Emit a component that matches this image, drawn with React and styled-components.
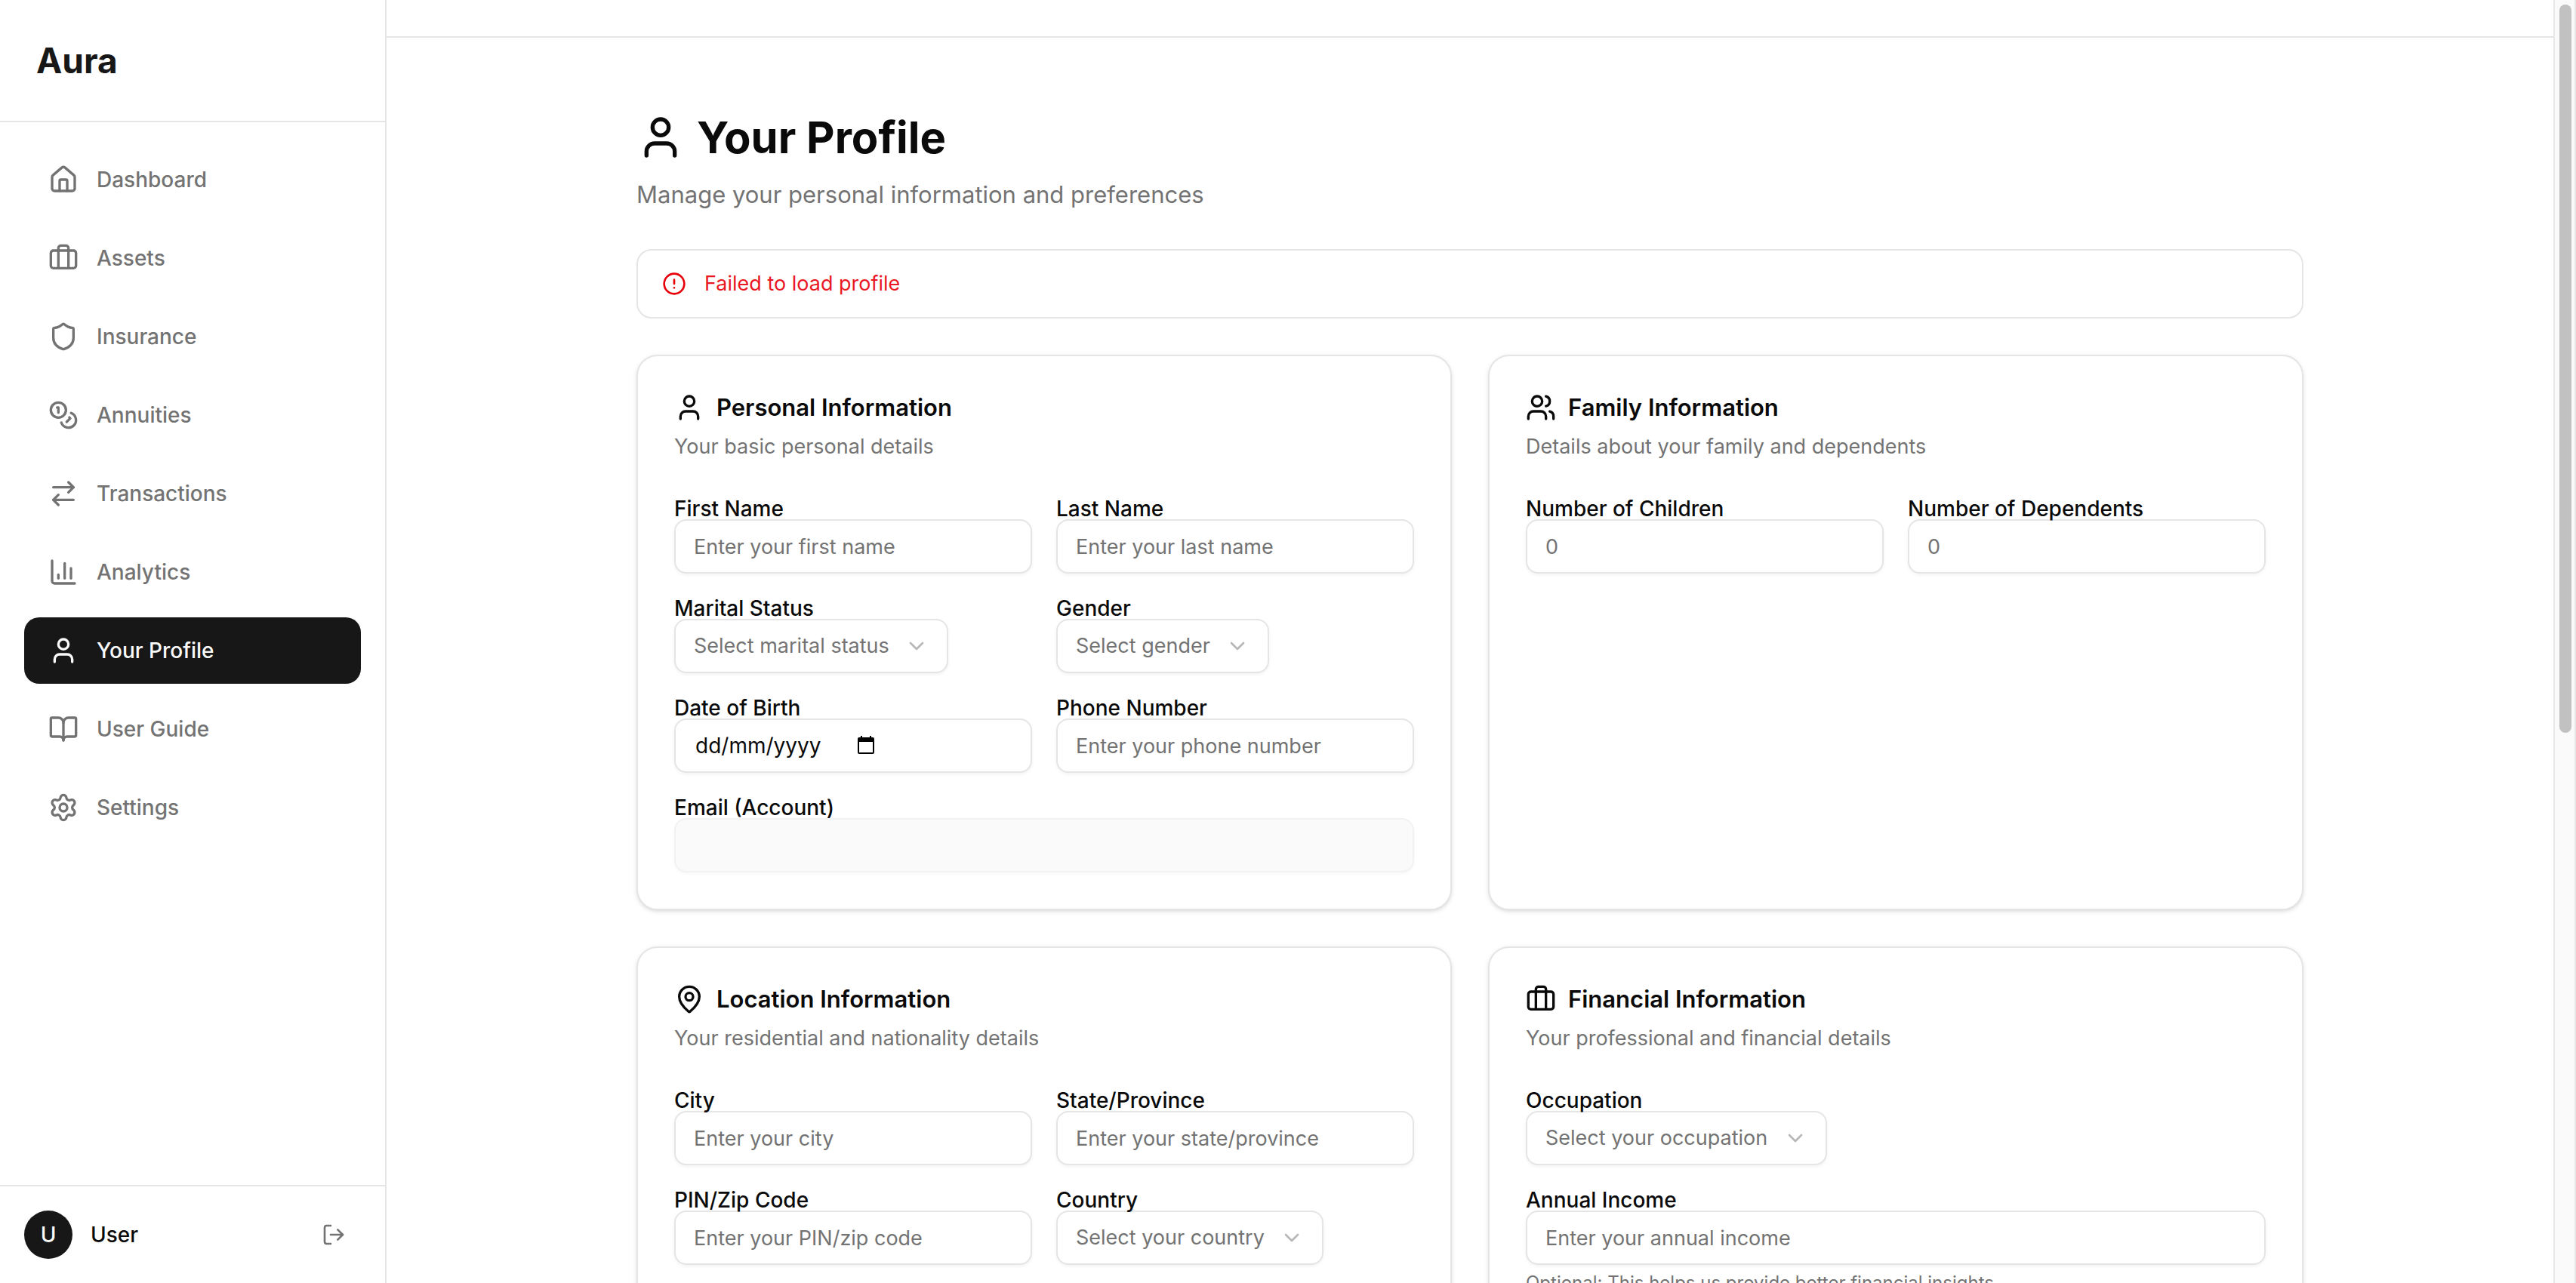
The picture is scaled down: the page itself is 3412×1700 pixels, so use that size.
import React from "react";
import styled, { createGlobalStyle, css } from "styled-components";
import {
  ArrowRightLeft,
  BookOpen,
  Briefcase,
  ChartColumn,
  ChevronDown,
  CircleAlert,
  Coins,
  House,
  LogOut,
  MapPin,
  Settings,
  Shield,
  User,
  Users,
} from "lucide-react";

const color = {
  ink: "#0a0a0a",
  primary: "#171717",
  muted: "#737373",
  line: "#e5e5e5",
  danger: "#e7000b",
};

const GlobalStyle = createGlobalStyle`
  *, *::before, *::after { box-sizing: border-box; }
  body {
    margin: 0;
    background: #fff;
    color: ${color.ink};
    font-family: Inter, "Liberation Sans", sans-serif;
    font-size: 27px;
    line-height: 40px;
    -webkit-font-smoothing: antialiased;
  }
  h1, h2, p { margin: 0; }
  input, select, button { font: inherit; color: inherit; }
  svg { flex-shrink: 0; display: block; }
`;

const Shell = styled.div`
  display: flex;
  height: 100vh;
  overflow: hidden;
`;

const Sidebar = styled.aside`
  display: flex;
  flex-direction: column;
  flex: 0 0 512px;
  border-right: 2px solid ${color.line};
`;

const Brand = styled.div`
  padding: 48px;
  border-bottom: 2px solid ${color.line};
  color: ${color.primary};
  font-size: 46px;
  line-height: 64px;
  font-weight: 700;
`;

const Nav = styled.nav`
  display: flex;
  flex-direction: column;
  flex: 1;
  gap: 16px;
  padding: 32px;
`;

const NavLink = styled.a`
  display: flex;
  align-items: center;
  gap: 24px;
  padding: 24px 32px;
  border-radius: 20px;
  font-size: 28px;
  font-weight: 500;
  text-decoration: none;
  color: ${(p) => (p.$active ? "#fafafa" : color.muted)};
  background: ${(p) => (p.$active ? color.primary : "transparent")};
`;

const Account = styled.div`
  display: flex;
  align-items: center;
  gap: 24px;
  padding: 32px;
  border-top: 2px solid ${color.line};
`;

const Avatar = styled.div`
  display: grid;
  place-items: center;
  width: 64px;
  height: 64px;
  border-radius: 50%;
  background: ${color.primary};
  color: #fafafa;
  font-size: 28px;
  font-weight: 500;
`;

const AccountName = styled.span`
  flex: 1;
  font-size: 28px;
  font-weight: 500;
`;

const IconButton = styled.button`
  display: grid;
  place-items: center;
  width: 72px;
  height: 64px;
  padding: 0;
  border: 0;
  border-radius: 16px;
  background: transparent;
  color: ${color.muted};
`;

const Main = styled.main`
  flex: 1;
  min-width: 0;
  overflow-y: auto;
  scrollbar-width: none;
`;

const TopBar = styled.div`
  height: 50px;
  border-bottom: 2px solid ${color.line};
`;

const Container = styled.div`
  display: flex;
  flex-direction: column;
  gap: 48px;
  max-width: 2304px;
  margin: 0 auto;
  padding: 96px 48px;
`;

const PageHeader = styled.header`
  display: flex;
  flex-direction: column;
  gap: 16px;
`;

const PageTitle = styled.h1`
  display: flex;
  align-items: center;
  gap: 16px;
  font-size: 58px;
  line-height: 72px;
  font-weight: 700;
`;

const PageSubtitle = styled.p`
  color: ${color.muted};
  font-size: 31px;
  line-height: 48px;
`;

const Alert = styled.div`
  display: flex;
  align-items: center;
  gap: 24px;
  padding: 24px 32px;
  border: 2px solid ${color.line};
  border-radius: 20px;
  color: ${color.danger};
`;

const AlertText = styled.p`
  opacity: 0.9;
`;

const CardGrid = styled.div`
  display: grid;
  grid-template-columns: repeat(2, minmax(0, 1fr));
  gap: 48px;
`;

const CardBox = styled.section`
  display: flex;
  flex-direction: column;
  gap: 48px;
  padding: 48px;
  border: 2px solid ${color.line};
  border-radius: 28px;
  background: #fff;
  box-shadow: 0 2px 6px rgba(0, 0, 0, 0.1), 0 2px 4px -2px rgba(0, 0, 0, 0.1);
`;

const CardHeader = styled.header`
  display: flex;
  flex-direction: column;
  gap: 12px;
`;

const CardTitle = styled.h2`
  display: flex;
  align-items: center;
  gap: 16px;
  font-size: 31px;
  line-height: 40px;
  font-weight: 600;
`;

const CardDescription = styled.p`
  color: ${color.muted};
`;

const Fields = styled.div`
  display: grid;
  grid-template-columns: repeat(2, minmax(0, 1fr));
  align-items: start;
  gap: 32px;
`;

const FieldBox = styled.div`
  display: flex;
  flex-direction: column;
  align-items: stretch;
  grid-column: ${(p) => (p.$wide ? "1 / -1" : "auto")};
`;

const Label = styled.label`
  z-index: 1;
  font-size: 28px;
  font-weight: 500;
  line-height: 28px;
`;

const control = css`
  height: 72px;
  border: 2px solid ${color.line};
  border-radius: 16px;
  background: #fff;
  box-shadow: 0 2px 4px rgba(0, 0, 0, 0.05);
`;

const Input = styled.input`
  ${control}
  width: 100%;
  padding: 0 24px;
  &::placeholder {
    color: ${color.muted};
    opacity: 1;
  }
  &:disabled {
    border-color: #f2f2f2;
    background: #fafafa;
    box-shadow: 0 2px 4px rgba(0, 0, 0, 0.03);
  }
  &[type="number"] {
    appearance: textfield;
  }
`;

const SelectWrap = styled.div`
  display: inline-grid;
  align-self: flex-start;
  align-items: center;
  svg {
    grid-area: 1 / 1;
    justify-self: end;
    margin-right: 26px;
    pointer-events: none;
    color: ${color.muted};
    opacity: 0.5;
  }
`;

const SelectInput = styled.select`
  ${control}
  grid-area: 1 / 1;
  appearance: none;
  padding: 0 76px 0 24px;
  color: ${color.muted};
`;

const DateBox = styled.div`
  ${control}
  display: flex;
  align-items: center;
  padding: 0 26px;
`;

const DateInput = styled.input`
  width: 210px;
  padding: 0;
  border: 0;
  background: transparent;
  font-size: 28px;
  &::placeholder {
    color: ${color.ink};
    opacity: 1;
  }
`;

const DateButton = styled.button`
  display: grid;
  place-items: center;
  width: 32px;
  height: 32px;
  padding: 0;
  border: 0;
  background: transparent;
`;

const Hint = styled.p`
  margin-top: 8px;
  color: ${color.muted};
  font-size: 24px;
  line-height: 32px;
`;

const ScrollTrack = styled.div`
  display: flex;
  flex-direction: column;
  flex: 0 0 30px;
  padding: 6px 4px 6px 6px;
  border: solid #e8e8e8;
  border-width: 0 2px;
  background: #fafafa;
`;

const ScrollThumb = styled.div`
  flex: 4;
  border-radius: 8px;
  background: #c1c1c1;
`;

const ScrollRest = styled.div`
  flex: 3;
`;

const navItems = [
  { label: "Dashboard", icon: House },
  { label: "Assets", icon: Briefcase },
  { label: "Insurance", icon: Shield },
  { label: "Annuities", icon: Coins },
  { label: "Transactions", icon: ArrowRightLeft },
  { label: "Analytics", icon: ChartColumn },
  { label: "Your Profile", icon: User, active: true },
  { label: "User Guide", icon: BookOpen },
  { label: "Settings", icon: Settings },
];

function CalendarIcon() {
  return (
    <svg width="24" height="26" viewBox="0 0 24 26" aria-hidden="true">
      <path
        fill="#000"
        fillRule="evenodd"
        d="M5 0h2v2h10V0h2v2h2a2 2 0 0 1 2 2v18a2 2 0 0 1-2 2H3a2 2 0 0 1-2-2V4a2 2 0 0 1 2-2h2zM3 8v14h18V8z"
      />
    </svg>
  );
}

function Field({ id, label, wide, hint, children, ...input }) {
  return (
    <FieldBox $wide={wide}>
      <Label htmlFor={id}>{label}</Label>
      {children || <Input id={id} {...input} />}
      {hint && <Hint>{hint}</Hint>}
    </FieldBox>
  );
}

function SelectField({ id, label, placeholder, wide }) {
  return (
    <Field id={id} label={label} wide={wide}>
      <SelectWrap>
        <SelectInput id={id} defaultValue="">
          <option value="">{placeholder}</option>
        </SelectInput>
        <ChevronDown size={32} />
      </SelectWrap>
    </Field>
  );
}

function DateField({ id, label }) {
  return (
    <Field id={id} label={label}>
      <DateBox>
        <DateInput id={id} placeholder="dd/mm/yyyy" inputMode="numeric" />
        <DateButton type="button" aria-label="Open calendar">
          <CalendarIcon />
        </DateButton>
      </DateBox>
    </Field>
  );
}

function Card({ icon: Icon, title, description, children }) {
  return (
    <CardBox>
      <CardHeader>
        <CardTitle>
          <Icon size={40} />
          {title}
        </CardTitle>
        <CardDescription>{description}</CardDescription>
      </CardHeader>
      <Fields>{children}</Fields>
    </CardBox>
  );
}

export default function App() {
  return (
    <>
      <GlobalStyle />
      <Shell>
        <Sidebar>
          <Brand>Aura</Brand>
          <Nav>
            {navItems.map(({ label, icon: Icon, active }) => (
              <NavLink key={label} href="#" $active={active} aria-current={active ? "page" : undefined}>
                <Icon size={40} />
                {label}
              </NavLink>
            ))}
          </Nav>
          <Account>
            <Avatar>U</Avatar>
            <AccountName>User</AccountName>
            <IconButton type="button" aria-label="Log out">
              <LogOut size={32} />
            </IconButton>
          </Account>
        </Sidebar>
        <Main>
          <TopBar />
          <Container>
            <PageHeader>
              <PageTitle>
                <User size={64} />
                Your Profile
              </PageTitle>
              <PageSubtitle>Manage your personal information and preferences</PageSubtitle>
            </PageHeader>
            <Alert role="alert">
              <CircleAlert size={32} />
              <AlertText>Failed to load profile</AlertText>
            </Alert>
            <CardGrid>
              <Card icon={User} title="Personal Information" description="Your basic personal details">
                <Field id="first-name" label="First Name" placeholder="Enter your first name" />
                <Field id="last-name" label="Last Name" placeholder="Enter your last name" />
                <SelectField id="marital" label="Marital Status" placeholder="Select marital status" />
                <SelectField id="gender" label="Gender" placeholder="Select gender" />
                <DateField id="birth" label="Date of Birth" />
                <Field id="phone" label="Phone Number" type="tel" placeholder="Enter your phone number" />
                <Field id="email" label="Email (Account)" type="email" wide disabled />
              </Card>
              <Card icon={Users} title="Family Information" description="Details about your family and dependents">
                <Field id="children" label="Number of Children" type="number" placeholder="0" />
                <Field id="dependents" label="Number of Dependents" type="number" placeholder="0" />
              </Card>
              <Card icon={MapPin} title="Location Information" description="Your residential and nationality details">
                <Field id="city" label="City" placeholder="Enter your city" />
                <Field id="state" label="State/Province" placeholder="Enter your state/province" />
                <Field id="zip" label="PIN/Zip Code" placeholder="Enter your PIN/zip code" />
                <SelectField id="country" label="Country" placeholder="Select your country" />
              </Card>
              <Card icon={Briefcase} title="Financial Information" description="Your professional and financial details">
                <SelectField id="occupation" label="Occupation" placeholder="Select your occupation" wide />
                <Field
                  id="income"
                  label="Annual Income"
                  type="number"
                  placeholder="Enter your annual income"
                  hint="Optional: This helps us provide better financial insights"
                  wide
                />
              </Card>
            </CardGrid>
          </Container>
        </Main>
        <ScrollTrack aria-hidden="true">
          <ScrollThumb />
          <ScrollRest />
        </ScrollTrack>
      </Shell>
    </>
  );
}
